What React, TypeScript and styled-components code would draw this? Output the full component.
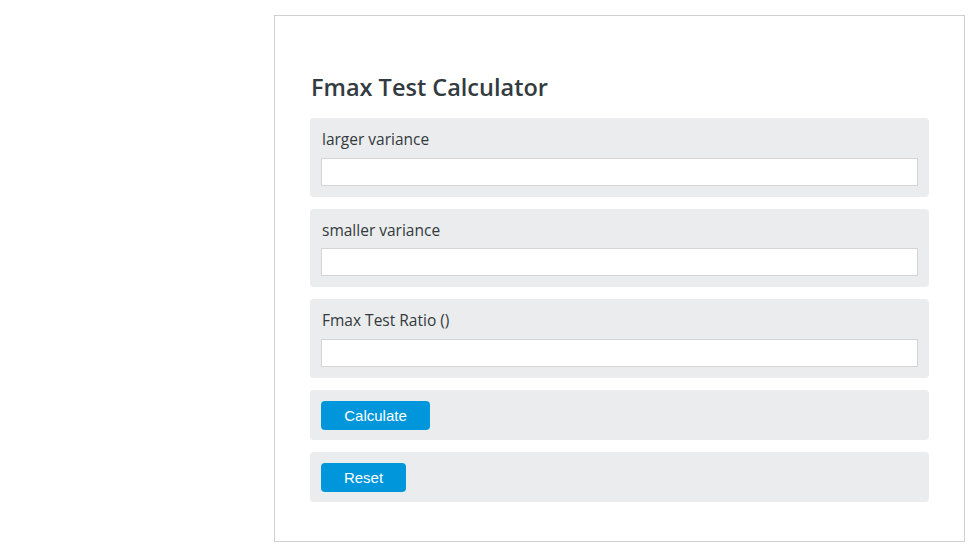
import React from "react";
import styled, { createGlobalStyle } from "styled-components";

const Global = createGlobalStyle`
  html, body { margin: 0; padding: 0; background: #fff; }
  body { font-family: "Open Sans", "Liberation Sans", sans-serif; }
  * { box-sizing: border-box; }
`;

const Page = styled.div`
  display: flex;
  padding: 15px 12px 0 274px;
`;

const Card = styled.div`
  width: 692px;
  border: 1px solid #d0d0d0;
  padding: 54px 35px 39px 35px;
  display: flex;
  flex-direction: column;
`;

const Title = styled.h1`
  margin: 0 0 14px 1px;
  font-family: "Open Sans", sans-serif;
  font-size: 23.5px;
  font-weight: 600;
  line-height: 34px;
  color: #333a40;
`;

const Stack = styled.div`
  display: flex;
  flex-direction: column;
  gap: 12px;
`;

const Panel = styled.div`
  background: #ebeced;
  border-radius: 4px;
  padding: 11px;
  display: flex;
  flex-direction: column;
`;

const Label = styled.label`
  font-family: "Open Sans", sans-serif;
  font-size: 15.5px;
  line-height: 20.67px;
  color: #333a40;
  padding-left: 1px;
  margin-bottom: 8px;
`;

const Input = styled.input`
  height: 28px;
  width: 100%;
  border: 1px solid #d4d4d4;
  background: #fff;
  padding: 0 6px;
  font-size: 15px;
  outline: none;
`;

const Button = styled.button<{ w: number }>`
  width: ${(p) => p.w}px;
  height: 29px;
  border: none;
  border-radius: 4px;
  background: #0096db;
  color: #fff;
  font-family: "Liberation Sans", Arial, sans-serif;
  font-size: 15px;
  padding: 0;
  cursor: pointer;
`;

const ButtonPanel = styled(Panel)`
  padding: 11px 11px 10px 11px;
  align-items: flex-start;
`;

export default function App() {
  return (
    <>
      <Global />
      <Page>
        <Card>
          <Title>Fmax Test Calculator</Title>
          <Stack>
            <Panel>
              <Label>larger variance</Label>
              <Input type="text" />
            </Panel>
            <Panel>
              <Label>smaller variance</Label>
              <Input type="text" />
            </Panel>
            <Panel>
              <Label>Fmax Test Ratio ()</Label>
              <Input type="text" />
            </Panel>
            <ButtonPanel>
              <Button w={109}>Calculate</Button>
            </ButtonPanel>
            <ButtonPanel>
              <Button w={85}>Reset</Button>
            </ButtonPanel>
          </Stack>
        </Card>
      </Page>
    </>
  );
}
